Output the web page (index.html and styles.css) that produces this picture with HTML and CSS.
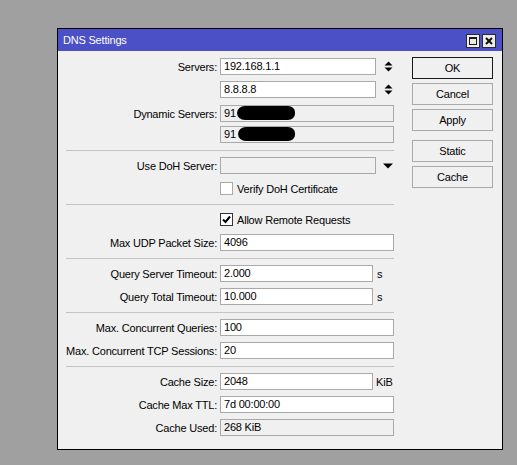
FILE: index.html
```html
<!DOCTYPE html>
<html>
<head>
<meta charset="utf-8">
<link rel="stylesheet" href="styles.css">
</head>
<body>
<div class="window">
  <div class="titlebar">
    <span class="title">DNS Settings</span>
    <div class="tb-btns">
      <svg class="tb-btn" width="14" height="14" viewBox="0 0 14 14"><rect x="0.5" y="0.5" width="13" height="13" fill="#ececec" stroke="#2a2a2a"/><rect x="3.5" y="3.5" width="7" height="7" fill="none" stroke="#1a1a1a"/><rect x="3" y="3" width="8" height="2" fill="#1a1a1a"/></svg>
      <svg class="tb-btn" width="14" height="14" viewBox="0 0 14 14"><rect x="0.5" y="0.5" width="13" height="13" fill="#ececec" stroke="#2a2a2a"/><path d="M4 4 L10 10 M10 4 L4 10" stroke="#111" stroke-width="2"/></svg>
    </div>
  </div>
  <div class="content">
    <div class="form">
      <div class="row"><span class="lbl">Servers:</span><div class="field"><span class="inp w-spin">192.168.1.1</span><svg class="spin" width="9" height="11" viewBox="0 0 9 11"><polygon points="0.5,4.5 4.5,0.5 8.5,4.5" fill="#000"/><polygon points="0.5,6.5 8.5,6.5 4.5,10.5" fill="#000"/></svg></div></div>
      <div class="row"><span class="lbl"></span><div class="field"><span class="inp w-spin">8.8.8.8</span><svg class="spin" width="9" height="11" viewBox="0 0 9 11"><polygon points="0.5,4.5 4.5,0.5 8.5,4.5" fill="#000"/><polygon points="0.5,6.5 8.5,6.5 4.5,10.5" fill="#000"/></svg></div></div>
      <div class="row dyn1"><span class="lbl">Dynamic Servers:</span><div class="field"><span class="inp ro w-full">91<span class="blot"></span></span></div></div>
      <div class="row dyn2"><span class="lbl"></span><div class="field"><span class="inp ro w-full">91<span class="blot b2"></span></span></div></div>
      <div class="sep"></div>
      <div class="row"><span class="lbl">Use DoH Server:</span><div class="field"><span class="inp ro w-spin"></span><svg class="drop" width="10" height="6" viewBox="0 0 10 6"><polygon points="0,0.5 10,0.5 5,5.5" fill="#000"/></svg></div></div>
      <div class="row"><span class="lbl"></span><div class="field"><span class="cb"></span><span class="cb-text">Verify DoH Certificate</span></div></div>
      <div class="sep"></div>
      <div class="row"><span class="lbl"></span><div class="field"><span class="cb checked"><svg width="11" height="11" viewBox="0 0 11 11"><path d="M2 5.5 L4.5 8 L9 2.5" fill="none" stroke="#000" stroke-width="2"/></svg></span><span class="cb-text">Allow Remote Requests</span></div></div>
      <div class="row"><span class="lbl">Max UDP Packet Size:</span><div class="field"><span class="inp w-full">4096</span></div></div>
      <div class="sep"></div>
      <div class="row"><span class="lbl">Query Server Timeout:</span><div class="field"><span class="inp w-unit">2.000</span><span class="unit">s</span></div></div>
      <div class="row"><span class="lbl">Query Total Timeout:</span><div class="field"><span class="inp w-unit">10.000</span><span class="unit">s</span></div></div>
      <div class="sep"></div>
      <div class="row"><span class="lbl">Max. Concurrent Queries:</span><div class="field"><span class="inp w-full">100</span></div></div>
      <div class="row"><span class="lbl">Max. Concurrent TCP Sessions:</span><div class="field"><span class="inp w-full">20</span></div></div>
      <div class="sep"></div>
      <div class="row"><span class="lbl">Cache Size:</span><div class="field"><span class="inp w-unit">2048</span><span class="unit kib">KiB</span></div></div>
      <div class="row"><span class="lbl">Cache Max TTL:</span><div class="field"><span class="inp w-full">7d 00:00:00</span></div></div>
      <div class="row"><span class="lbl">Cache Used:</span><div class="field"><span class="inp ro w-full">268 KiB</span></div></div>
    </div>
    <div class="actions">
      <div class="btn default">OK</div>
      <div class="btn">Cancel</div>
      <div class="btn">Apply</div>
      <div class="btn gap">Static</div>
      <div class="btn">Cache</div>
    </div>
  </div>
</div>
</body>
</html>
```
FILE: styles.css
```css
html, body {
  margin: 0;
  padding: 0;
  background: #a0a0a0;
  font-family: "Liberation Sans", Arial, sans-serif;
  font-size: 11px;
  letter-spacing: -0.2px;
  color: #000;
}
.window {
  margin: 28px 0 0 57px;
  width: 446px;
  height: 422px;
  box-sizing: border-box;
  border: 1px solid #000;
  background: #f0f0f0;
  display: flex;
  flex-direction: column;
}
.titlebar {
  height: 22px;
  background: #4b50c7;
  display: flex;
  align-items: center;
  justify-content: space-between;
  padding: 0 6px 0 5px;
}
.title {
  color: #fff;
  font-size: 11px;
}
.tb-btns {
  display: flex;
  gap: 2px;
  margin-top: 1px;
}
.tb-btn { display: block; }
.content {
  flex: 1;
  display: flex;
  padding-top: 4px;
}
.form {
  width: 345px;
}
.row {
  display: grid;
  grid-template-columns: 159px 1fr;
  column-gap: 3px;
  height: 23px;
  align-items: center;
}
.row.dyn1 { margin-top: 1px; }
.row.dyn2 { margin-top: -2px; }
.lbl {
  text-align: right;
  white-space: nowrap;
}
.field {
  display: flex;
  align-items: center;
}
.inp {
  position: relative;
  box-sizing: border-box;
  height: 17px;
  border: 1px solid #a9a9a9;
  background: #fff;
  padding: 0 3px;
  line-height: 15px;
  white-space: nowrap;
  overflow: hidden;
}
.inp.ro { background: #f0f0f0; }
.w-full { width: 174px; }
.w-spin { width: 156px; }
.w-unit { width: 153px; }
.spin { margin-left: 8px; }
.drop { margin-left: 7px; }
.unit { margin-left: 4px; }
.unit.kib { margin-left: 3px; }
.blot {
  position: absolute;
  left: 16px;
  top: 0;
  width: 58px;
  height: 14px;
  background: #000;
  border-radius: 9px 8px 8px 9px / 8px 7px 7px 8px;
}
.blot.b2 { left: 17px; width: 57px; }
.cb {
  box-sizing: border-box;
  width: 13px;
  height: 13px;
  border: 1px solid #a9a9a9;
  background: #fff;
  display: flex;
  align-items: center;
  justify-content: center;
}
.cb.checked { border-color: #333; }
.cb svg { display: block; }
.cb-text { margin-left: 4px; }
.sep {
  height: 1px;
  background: #c4c4c4;
  margin: 4px 0 3px 8px;
  width: 328px;
}
.actions {
  margin-left: auto;
  margin-right: 9px;
  width: 81px;
  padding-top: 2px;
  display: flex;
  flex-direction: column;
}
.btn {
  box-sizing: border-box;
  height: 22px;
  border: 1px solid #a9a9a9;
  background: #f0f0f0;
  display: flex;
  align-items: center;
  justify-content: center;
  margin-bottom: 4px;
}
.btn.default { border-color: #1a1a1a; }
.btn.gap { margin-top: 5px; }
```
